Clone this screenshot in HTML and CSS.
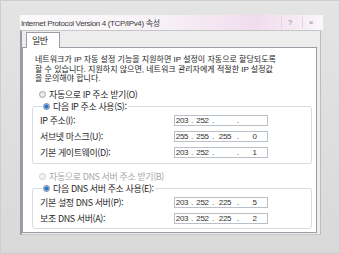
FILE: index.html
```html
<!DOCTYPE html>
<html lang="ko">

<head>
    <meta charset="UTF-8">
    <meta name="viewport" content="width=device-width, initial-scale=1.0">
    <title>IPv4 속성</title>
    <link rel="stylesheet" href="styles.css">
</head>

<body>
    <div class="screen">
        <div class="window">
            <div class="titlebar">
                <span class="title">Internet Protocol Version 4 (TCP/IPv4) 속성</span>
                <span class="tbtn">?</span>
                <span class="tbtn">&times;</span>
            </div>
            <div class="dialog">
                <div class="tabs">
                    <div class="tab">일반</div>
                </div>
                <div class="panel">
                    <p class="intro">네트워크가 IP 자동 설정 기능을 지원하면 IP 설정이 자동으로 할당되도록<br>할 수 있습니다. 지원하지 않으면, 네트워크 관리자에게 적절한 IP 설정값<br>을 문의해야 합니다.</p>

                    <div class="radio first"><span class="dot"></span>자동으로 IP 주소 받기(O)</div>
                    <fieldset class="group">
                        <legend class="radio"><span class="dot on"></span>다음 IP 주소 사용(S):</legend>
                        <div class="row">
                            <span class="lbl">IP 주소(I):</span>
                            <span class="ip"><span>203</span><i>.</i><span>252</span><i>.</i><span></span><i>.</i><span></span></span>
                        </div>
                        <div class="row">
                            <span class="lbl">서브넷 마스크(U):</span>
                            <span class="ip"><span>255</span><i>.</i><span>255</span><i>.</i><span>255</span><i>.</i><span>0</span></span>
                        </div>
                        <div class="row">
                            <span class="lbl">기본 게이트웨이(D):</span>
                            <span class="ip"><span>203</span><i>.</i><span>252</span><i>.</i><span></span><i>.</i><span>1</span></span>
                        </div>
                    </fieldset>

                    <div class="radio off gap"><span class="dot"></span>자동으로 DNS 서버 주소 받기(B)</div>
                    <fieldset class="group">
                        <legend class="radio"><span class="dot on"></span>다음 DNS 서버 주소 사용(E):</legend>
                        <div class="row">
                            <span class="lbl">기본 설정 DNS 서버(P):</span>
                            <span class="ip"><span>203</span><i>.</i><span>252</span><i>.</i><span>225</span><i>.</i><span>5</span></span>
                        </div>
                        <div class="row short">
                            <span class="lbl">보조 DNS 서버(A):</span>
                            <span class="ip"><span>203</span><i>.</i><span>252</span><i>.</i><span>225</span><i>.</i><span>2</span></span>
                        </div>
                    </fieldset>
                </div>
            </div>
        </div>
    </div>
</body>

</html>
```

FILE: styles.css
```css
* {
    margin: 0;
    padding: 0;
    box-sizing: border-box;
}

body {
    background: #dadada;
}

.screen {
    width: 340px;
    height: 254px;
    border: 1px solid #cdcdcd;
    background: linear-gradient(#e4e4e4, #d9d9d9);
    padding: 14px 0 0 19px;
    font-family: "Noto Sans CJK KR", "Liberation Sans", sans-serif;
    color: #2a2a2a;
}

.window {
    width: 303px;
}

.titlebar {
    display: flex;
    align-items: center;
    height: 15px;
    padding-left: 1px;
    background: linear-gradient(90deg, #fbfafb 0%, #f8f2f7 45%, #f0dcee 78%, #f6ecf5 92%, #fbf7fa 100%);
}

.title {
    flex: 1;
    font: 8px "Liberation Sans", "Noto Sans CJK KR", sans-serif;
    letter-spacing: -0.35px;
    color: #3a3a3a;
    white-space: nowrap;
}

.tbtn {
    width: 17px;
    height: 11px;
    text-align: center;
    font: 8px/11px "Liberation Sans", sans-serif;
    color: #8a8a96;
    border-left: 1px solid #e2d4e0;
    margin-right: 4px;
}

.dialog {
    width: 301px;
    background: #ededed;
    border-left: 2px solid #9c98a4;
    border-right: 1px solid #bdbdbd;
    border-top: 1px solid #c6c6c6;
    border-bottom: 1px solid #c6c6c6;
    padding: 1px 3px 1px 0;
}

.tabs {
    display: flex;
    padding-left: 4px;
}

.tab {
    position: relative;
    width: 34px;
    height: 16px;
    margin-bottom: -1px;
    background: #fff;
    border: 1px solid #9a9ca6;
    border-bottom: none;
    font-size: 9px;
    line-height: 15px;
    padding-left: 5px;
    letter-spacing: -0.5px;
}

.panel {
    background: #fff;
    border: 1px solid #9a9ca6;
    padding: 7px 4px 3px 12px;
}

.intro {
    font-family: "Liberation Sans", "Noto Sans CJK KR", sans-serif;
    font-size: 8px;
    line-height: 9.5px;
    letter-spacing: 0;
    white-space: nowrap;
    color: #1e1e1e;
}

.radio {
    display: flex;
    align-items: center;
    height: 12px;
    font-size: 9px;
    letter-spacing: -0.4px;
    white-space: nowrap;
    margin: 10px 0 0 4px;
}

.radio.first {
    margin-top: 5px;
}

.radio.gap {
    margin-top: 7px;
}

.radio.off {
    color: #a8a8a8;
}

.dot {
    width: 7px;
    height: 7px;
    border-radius: 50%;
    border: 1px solid #9ea4ad;
    background: radial-gradient(#f4f4f4, #dcdcdc);
    margin-right: 3px;
    flex: none;
}

.radio.off .dot {
    border-color: #cfcfcf;
    background: #f2f2f2;
}

.dot.on {
    border-color: #6a86a8;
    background: radial-gradient(circle, #1f5fae 0, #3b86d4 1.8px, #d8e6f4 2.6px, #eef3f8 100%);
}

.group {
    min-width: 0;
    margin: 0 0 0 -3px;
    padding: 0 7px 2px;
    border: 1px solid #d6dde4;
    border-radius: 3px;
}

.group legend.radio {
    margin: 0 0 0 2px;
    padding: 0 1px;
}

.row {
    display: flex;
    align-items: center;
    height: 16px;
    font-size: 9px;
    letter-spacing: -0.4px;
    white-space: nowrap;
}

.row.short {
    height: 15px;
}

.lbl {
    width: 134px;
}

.ip {
    display: grid;
    grid-template-columns: 14px 6px 15px 6px 18px 8px 25px;
    width: 94px;
    height: 11px;
    border: 1px solid #b9c0ca;
    font: 8px/9px "Liberation Sans", sans-serif;
    letter-spacing: -0.3px;
    color: #333;
    text-align: center;
}

.ip i {
    font-style: normal;
}
```
